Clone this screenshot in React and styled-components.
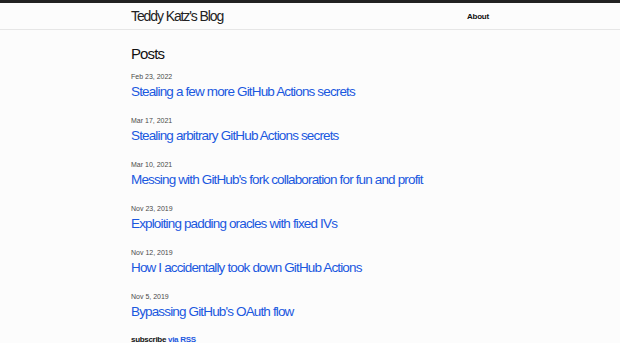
import React from 'react';
import styled, { createGlobalStyle } from 'styled-components';

const GlobalStyle = createGlobalStyle`
  html, body {
    margin: 0;
    padding: 0;
    background: #fcfcfc;
    color: #111;
    font-family: "Liberation Sans", Arial, sans-serif;
  }
`;

const posts = [
  { date: 'Feb 23, 2022', title: 'Stealing a few more GitHub Actions secrets' },
  { date: 'Mar 17, 2021', title: 'Stealing arbitrary GitHub Actions secrets' },
  { date: 'Mar 10, 2021', title: "Messing with GitHub's fork collaboration for fun and profit" },
  { date: 'Nov 23, 2019', title: 'Exploiting padding oracles with fixed IVs' },
  { date: 'Nov 12, 2019', title: 'How I accidentally took down GitHub Actions' },
  { date: 'Nov 5, 2019', title: "Bypassing GitHub's OAuth flow" },
];

const Header = styled.header`
  border-top: 3px solid #222;
  border-bottom: 1px solid #e6e6e6;
  height: 26px;
`;

const Wrapper = styled.div`
  width: 358px;
  margin: 0 auto;
`;

const HeaderInner = styled(Wrapper)`
  display: flex;
  align-items: center;
  justify-content: space-between;
  height: 100%;
`;

const SiteTitle = styled.a`
  font-size: 14px;
  letter-spacing: -1.1px;
  color: #222;
  text-decoration: none;
`;

const NavLink = styled.a`
  font-size: 8px;
  font-weight: bold;
  letter-spacing: -0.2px;
  color: #111;
  text-decoration: none;
`;

const Main = styled(Wrapper)`
  padding-top: 15px;
`;

const PageHeading = styled.h1`
  margin: 0 0 9px;
  font-size: 15px;
  line-height: 18px;
  font-weight: normal;
  letter-spacing: -0.9px;
  color: #111;
`;

const PostList = styled.ul`
  list-style: none;
  margin: 0;
  padding: 0;
  display: flex;
  flex-direction: column;
  gap: 16px;
`;

const PostItem = styled.li`
  display: flex;
  flex-direction: column;
  gap: 3px;
`;

const PostDate = styled.span`
  font-size: 7px;
  line-height: 9px;
  color: #4a4a4a;
`;

const PostLink = styled.a`
  font-size: 13.5px;
  line-height: 16px;
  letter-spacing: -0.85px;
  color: #1a58df;
  text-decoration: none;
`;

const Subscribe = styled.p`
  margin: 15px 0 0;
  font-size: 8px;
  line-height: 10px;
  font-weight: bold;
  letter-spacing: -0.3px;
  color: #111;
`;

const RssLink = styled.a`
  color: #1a58df;
  text-decoration: none;
`;

export default function App() {
  return (
    <>
      <GlobalStyle />
      <Header>
        <HeaderInner>
          <SiteTitle href="#">Teddy Katz's Blog</SiteTitle>
          <NavLink href="#">About</NavLink>
        </HeaderInner>
      </Header>
      <Main>
        <PageHeading>Posts</PageHeading>
        <PostList>
          {posts.map((post) => (
            <PostItem key={post.title}>
              <PostDate>{post.date}</PostDate>
              <PostLink href="#">{post.title}</PostLink>
            </PostItem>
          ))}
        </PostList>
        <Subscribe>
          subscribe <RssLink href="#">via RSS</RssLink>
        </Subscribe>
      </Main>
    </>
  );
}
